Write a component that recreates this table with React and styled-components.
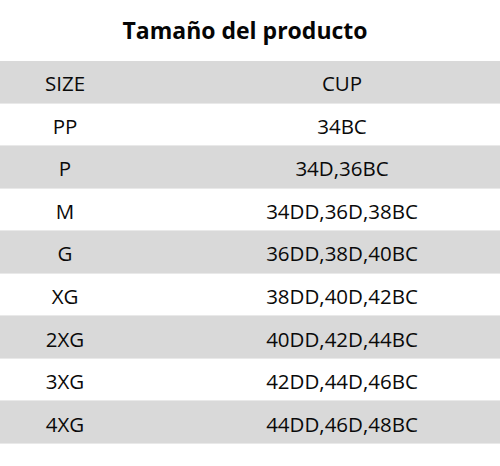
import React from "react";
import styled, { createGlobalStyle } from "styled-components";

const Global = createGlobalStyle`
  html, body { margin: 0; padding: 0; background: #ffffff; }
  body { font-family: "Open Sans", "Noto Sans", sans-serif; color: #111111; }
`;

const Page = styled.div`
  width: 500px;
  height: 466px;
  display: flex;
  flex-direction: column;
  background: #ffffff;
  overflow: hidden;
`;

const Title = styled.h1`
  margin: 0;
  height: 61px;
  display: flex;
  align-items: center;
  justify-content: center;
  font-size: 23px;
  font-weight: 700;
  color: #050505;
  padding: 0 10px 1px 0;
  box-sizing: border-box;
`;

const Table = styled.div`
  display: grid;
  grid-template-columns: 130px 1fr;
  grid-template-rows: repeat(9, 1fr);
  height: 383px;
`;

const Cell = styled.div`
  display: flex;
  align-items: center;
  justify-content: center;
  font-size: 20.5px;
  color: #0a0a0a;
  background: ${(p) => (p.$shaded ? "#d9d9d9" : "#ffffff")};
  border-bottom: 1px solid #e9e9e9;
  padding-left: ${(p) => (p.$cup ? "54px" : "0")};
  padding-top: 3px;
  box-sizing: border-box;
`;

const rows = [
  ["SIZE", "CUP"],
  ["PP", "34BC"],
  ["P", "34D,36BC"],
  ["M", "34DD,36D,38BC"],
  ["G", "36DD,38D,40BC"],
  ["XG", "38DD,40D,42BC"],
  ["2XG", "40DD,42D,44BC"],
  ["3XG", "42DD,44D,46BC"],
  ["4XG", "44DD,46D,48BC"],
];

export default function App() {
  return (
    <>
      <Global />
      <Page>
        <Title>Tamaño del producto</Title>
        <Table>
          {rows.map(([size, cup], i) => (
            <React.Fragment key={size}>
              <Cell $shaded={i % 2 === 0}>{size}</Cell>
              <Cell $shaded={i % 2 === 0} $cup>{cup}</Cell>
            </React.Fragment>
          ))}
        </Table>
      </Page>
    </>
  );
}
